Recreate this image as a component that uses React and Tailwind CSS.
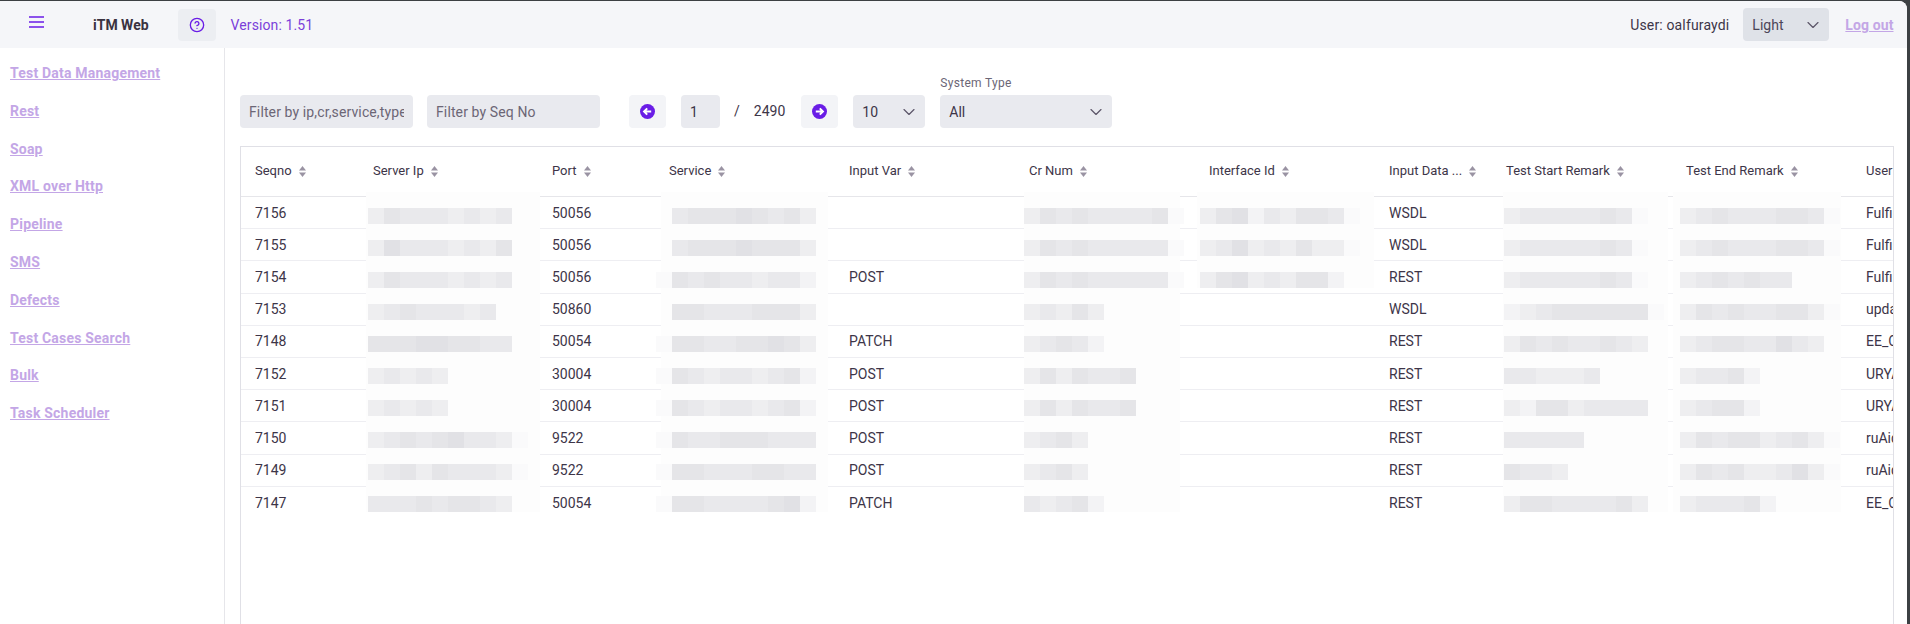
import React from 'react';
import { ChevronDown, CircleHelp } from 'lucide-react';

const NAV_LINKS = [
  'Test Data Management',
  'Rest',
  'Soap',
  'XML over Http',
  'Pipeline',
  'SMS',
  'Defects',
  'Test Cases Search',
  'Bulk',
  'Task Scheduler',
];

const COLUMNS = [
  { label: 'Seqno', cell: 'pl-[14px]' },
  { label: 'Server Ip', cell: 'pl-[15px]' },
  { label: 'Port', cell: 'pl-[15px]' },
  { label: 'Service', cell: 'pl-[15px]' },
  { label: 'Input Var', cell: 'pl-[15px]' },
  { label: 'Cr Num', cell: 'pl-[15px]' },
  { label: 'Interface Id', cell: 'pl-[15px]' },
  { label: 'Input Data ...', cell: 'pl-[15px]' },
  { label: 'Test Start Remark', cell: 'pl-[15px]' },
  { label: 'Test End Remark', cell: 'pl-[15px]' },
  { label: 'User', cell: 'pl-[15px]' },
];

const ROW_GRID = 'grid grid-cols-[117px_179px_117px_180px_180px_180px_180px_117px_180px_180px_200px]';

// masked values: each letter is one 16px mosaic tile
const SHADES = {
  '.': 'bg-transparent',
  a: 'bg-[#fafafb]',
  b: 'bg-[#f3f3f5]',
  c: 'bg-[#eeeef0]',
  d: 'bg-[#e9e9ec]',
  e: 'bg-[#e5e5e8]',
  f: 'bg-[#e1e1e5]',
};

const MASKS = {
  ip: { halo: 'left-[8px] w-[174px]', block: 'left-[10px]' },
  service: { halo: 'left-[7px] w-[167px]', block: 'left-[2px]' },
  cr: { halo: 'left-[10px] w-[156px]', block: 'left-[10px]' },
  iface: { halo: 'left-[3px] w-[177px]', block: 'left-[6px]' },
  start: { halo: 'left-[12px] w-[165px]', block: 'left-[13px]' },
  end: { halo: 'left-[2px] w-[168px]', block: 'left-[9px]' },
};

const ROWS = [
  {
    seq: '7156', port: '50056', input: '', type: 'WSDL', user: 'Fulfillment', top: 'top-[11px]',
    ip: 'cedddcdcd', service: '.deeefedec', cr: 'cededdddea', iface: 'cefbdceeda', start: 'cdddddeda', end: 'cdedddeeda',
  },
  {
    seq: '7155', port: '50056', input: '', type: 'WSDL', user: 'Fulfillment', top: 'top-[11px]',
    ip: 'cfdddcdce', service: '.deeefeeec', cr: 'cededdddda', iface: 'cdfcdcecca', start: 'cdddddeda', end: 'cdedddeeda',
  },
  {
    seq: '7154', port: '50056', input: 'POST', type: 'REST', user: 'Fulfillment', top: 'top-[11px]',
    ip: 'cedddcdcd', service: 'aededdcddb', cr: 'cededdddda', iface: 'cefcdceeb', start: 'cdddddeda', end: 'cdededd',
  },
  {
    seq: '7153', port: '50860', input: '', type: 'WSDL', user: 'updateOrder', top: 'top-[10px]',
    ip: 'cdedddcd', service: '.eedddeeec', cr: 'cdcec', iface: '', start: 'bcdeeeeeea', end: 'cededdeeca',
  },
  {
    seq: '7148', port: '50054', input: 'PATCH', type: 'REST', user: 'EE_Cust', top: 'top-[10px]',
    ip: 'eeeffeedd', service: 'aeeddeefec', cr: 'cdedb', iface: '', start: 'cededdedc', end: 'cdeeddfdc',
  },
  {
    seq: '7152', port: '30004', input: 'POST', type: 'REST', user: 'URYAN', top: 'top-[10px]',
    ip: 'cdcdc', service: 'aedcddcdeb', cr: 'cecedde', iface: '', start: 'ddcccd', end: 'cddeb',
  },
  {
    seq: '7151', port: '30004', input: 'POST', type: 'REST', user: 'URYAN', top: 'top-[10px]',
    ip: 'cdcdc', service: 'aedcddcdeb', cr: 'cecedde', iface: '', start: 'cbeecdddd', end: 'cdeeb',
  },
  {
    seq: '7150', port: '9522', input: 'POST', type: 'REST', user: 'ruAiq', top: 'top-[10px]',
    ip: 'cdedefddca', service: 'aeddeeeddd', cr: 'cdec', iface: '', start: 'ddddd', end: 'cedeecdeca',
  },
  {
    seq: '7149', port: '9522', input: 'POST', type: 'REST', user: 'ruAiq', top: 'top-[9px]',
    ip: 'cdecedddca', service: 'aeedddeedd', cr: 'cdec', iface: '', start: 'eddc', end: 'cedeccdfca',
  },
  {
    seq: '7147', port: '50054', input: 'PATCH', type: 'REST', user: 'EE_Cust', top: 'top-[9px]',
    ip: 'dddedeedc', service: 'aeeddddefb', cr: 'dcdeb', iface: '', start: 'ceeddddec', end: 'cdddeb',
  },
];

function SortIcon() {
  return (
    <svg width="7" height="11" viewBox="0 0 7 11" className="shrink-0 fill-[#9a93a3]">
      <path d="M3.5 0 7 4.4H0z" />
      <path d="M3.5 11 0 6.6h7z" />
    </svg>
  );
}

function Masked({ kind, tiles, top }) {
  if (!tiles) return null;
  const mask = MASKS[kind];
  return (
    <div className={`absolute inset-x-0 h-0 ${top}`}>
      <div className={`absolute -top-4 h-8 bg-[#fdfdfd] ${mask.halo}`} />
      <div className={`absolute top-0 flex ${mask.block}`}>
        {tiles.split('').map((tile, i) => (
          <span key={i} className={`h-4 w-4 ${SHADES[tile] || SHADES.c}`} />
        ))}
      </div>
    </div>
  );
}

function Cell({ className = '', children }) {
  return (
    <div className={`relative flex items-center whitespace-nowrap ${className}`}>{children}</div>
  );
}

function ArrowButton({ direction }) {
  return (
    <button className="flex h-[33px] w-[37px] items-center justify-center rounded bg-[#f3f4f7]">
      <svg width="15" height="15" viewBox="0 0 15 15">
        <circle cx="7.5" cy="7.5" r="7.5" className="fill-[#6a1de6]" />
        {direction === 'left' ? (
          <path d="M11.2 7.5H4.4M7.2 4.4 4.1 7.5l3.1 3.1" fill="none" stroke="#fff" strokeWidth="2" />
        ) : (
          <path d="M3.8 7.5h6.8M7.8 4.4l3.1 3.1-3.1 3.1" fill="none" stroke="#fff" strokeWidth="2" />
        )}
      </svg>
    </button>
  );
}

function SelectBox({ value, className = '' }) {
  return (
    <div className={`flex h-[33px] items-center justify-between rounded pl-[9px] pr-[6px] text-sm ${className}`}>
      <span>{value}</span>
      <ChevronDown size={20} strokeWidth={1.4} className="text-[#5b5568]" />
    </div>
  );
}

const INPUT_CLASS =
  'h-[33px] rounded bg-[#e9eaef] px-[9px] text-sm tracking-[0.12px] text-[#3d3548] outline-none placeholder:text-[#6c6676]';

export default function App() {
  return (
    <div className="h-screen w-full overflow-hidden bg-[#3c4043] pt-px pr-[3.5px] font-['Roboto',sans-serif] text-sm text-[#3d3548]">
      <div className="flex h-full flex-col overflow-hidden rounded-tr-lg bg-white">
        {/* Header */}
        <header className="flex h-[47px] shrink-0 items-center bg-[#f5f6f9] pr-[13px]">
          <button className="ml-[29px] flex h-4 w-[15px] -translate-y-[3px] items-center">
            <svg width="15" height="12" viewBox="0 0 15 12" className="stroke-[#6a1de6]" strokeWidth="1.6">
              <path d="M0 1h15M0 6h15M0 11h15" />
            </svg>
          </button>
          <span className="ml-[49px] font-bold text-[#3a3240]">iTM Web</span>
          <button className="ml-[29px] flex h-8 w-[38px] items-center justify-center rounded bg-[#eceef2]">
            <CircleHelp size={16} strokeWidth={2} className="text-[#6a1de6]" />
          </button>
          <span className="ml-[15px] tracking-[0.1px] text-[#7b3fd9]">Version: 1.51</span>
          <span className="ml-auto tracking-[0.15px]">User: oalfuraydi</span>
          <SelectBox value="Light" className="ml-[14px] w-[86px] bg-[#dfe2e8] text-[#4c4658]" />
          <a href="#logout" className="ml-[16px] font-bold tracking-[0.1px] text-[#c3a6e6] underline">
            Log out
          </a>
        </header>

        <div className="flex min-h-0 flex-1">
          {/* Sidebar */}
          <nav className="flex w-[225px] shrink-0 flex-col gap-[16.8px] border-r border-[#e6e6ea] pl-[10px] pt-[15px]">
            {NAV_LINKS.map(link => (
              <a key={link} href="#nav" className="font-bold leading-[21px] tracking-[0.2px] text-[#c3a6e6] underline">
                {link}
              </a>
            ))}
          </nav>

          {/* Main */}
          <main className="flex min-w-0 flex-1 flex-col pl-[15px] pr-[13px] pt-[27px]">
            <div className="flex items-end">
              <input className={`w-[173px] ${INPUT_CLASS}`} placeholder="Filter by ip,cr,service,type,date" />
              <input className={`ml-[14px] w-[173px] ${INPUT_CLASS}`} placeholder="Filter by Seq No" />
              <div className="ml-[29px]">
                <ArrowButton direction="left" />
              </div>
              <input className={`ml-[15px] w-[39px] ${INPUT_CLASS}`} defaultValue="1" />
              <span className="mb-[7px] ml-[14px]">/</span>
              <span className="mb-[7px] ml-[14px]">2490</span>
              <div className="ml-[16px]">
                <ArrowButton direction="right" />
              </div>
              <SelectBox value="10" className="ml-[15px] w-[72px] bg-[#e9eaef]" />
              <div className="ml-[15px] flex w-[172px] flex-col gap-[4px]">
                <label className="text-xs leading-4 tracking-[0.3px] text-[#6c6676]">System Type</label>
                <SelectBox value="All" className="bg-[#e9eaef]" />
              </div>
            </div>

            {/* Table */}
            <div className="mt-[18px] h-[560px] shrink-0 overflow-hidden border border-[#e0e0e6]">
              <div className={`${ROW_GRID} h-[50px] w-max border-b border-[#e6e6ea]`}>
                {COLUMNS.map(col => (
                  <Cell key={col.label} className={`gap-[7px] text-[13px] ${col.cell}`}>
                    <span>{col.label}</span>
                    <SortIcon />
                  </Cell>
                ))}
              </div>
              {ROWS.map((row, i) => (
                <div
                  key={row.seq}
                  className={`${ROW_GRID} h-[32.2px] w-max ${i < ROWS.length - 1 ? 'border-b border-[#eeeef2]' : ''}`}
                >
                  <Cell className="pl-[14px]">{row.seq}</Cell>
                  <Cell className="pl-[15px]">
                    <Masked kind="ip" tiles={row.ip} top={row.top} />
                  </Cell>
                  <Cell className="pl-[15px]">{row.port}</Cell>
                  <Cell className="pl-[15px]">
                    <Masked kind="service" tiles={row.service} top={row.top} />
                  </Cell>
                  <Cell className="pl-[15px]">{row.input}</Cell>
                  <Cell className="pl-[15px]">
                    <Masked kind="cr" tiles={row.cr} top={row.top} />
                  </Cell>
                  <Cell className="pl-[15px]">
                    <Masked kind="iface" tiles={row.iface} top={row.top} />
                  </Cell>
                  <Cell className="pl-[15px]">{row.type}</Cell>
                  <Cell className="pl-[15px]">
                    <Masked kind="start" tiles={row.start} top={row.top} />
                  </Cell>
                  <Cell className="pl-[15px]">
                    <Masked kind="end" tiles={row.end} top={row.top} />
                  </Cell>
                  <Cell className="pl-[15px]">{row.user}</Cell>
                </div>
              ))}
            </div>
          </main>
        </div>
      </div>
    </div>
  );
}
